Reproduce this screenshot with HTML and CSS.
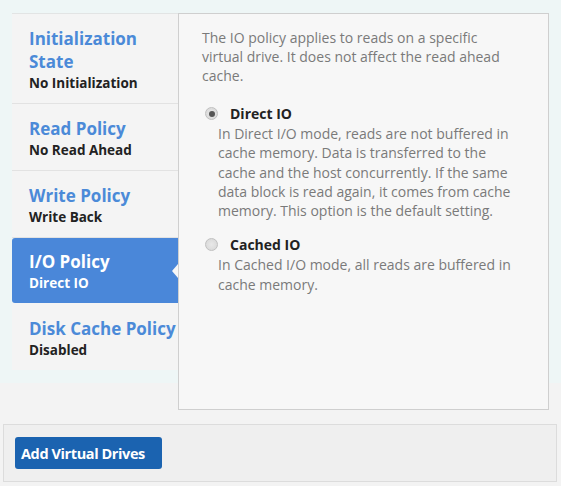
FILE: index.html
```html
<!DOCTYPE html>
<html>
<head>
<meta charset="utf-8">
<link rel="stylesheet" href="styles.css">
</head>
<body>
<div class="layout">
  <ul class="steps">
    <li class="step">
      <div class="step-title">Initialization State</div>
      <div class="step-value">No Initialization</div>
    </li>
    <li class="step">
      <div class="step-title">Read Policy</div>
      <div class="step-value">No Read Ahead</div>
    </li>
    <li class="step">
      <div class="step-title">Write Policy</div>
      <div class="step-value">Write Back</div>
    </li>
    <li class="step active">
      <div class="step-title">I/O Policy</div>
      <div class="step-value">Direct IO</div>
    </li>
    <li class="step last">
      <div class="step-title">Disk Cache Policy</div>
      <div class="step-value">Disabled</div>
    </li>
  </ul>
  <div class="panel">
    <p class="intro">The IO policy applies to reads on a specific virtual drive. It does not affect the read ahead cache.</p>
    <div class="option">
      <div class="option-head"><span class="radio checked"></span><span class="option-label">Direct IO</span></div>
      <p class="option-desc">In Direct I/O mode, reads are not buffered in cache memory. Data is transferred to the cache and the host concurrently. If the same data block is read again, it comes from cache memory. This option is the default setting.</p>
    </div>
    <div class="option">
      <div class="option-head"><span class="radio"></span><span class="option-label">Cached IO</span></div>
      <p class="option-desc">In Cached I/O mode, all reads are buffered in cache memory.</p>
    </div>
  </div>
</div>
<div class="footer">
  <button class="btn-primary">Add Virtual Drives</button>
</div>
</body>
</html>
```
FILE: styles.css
```css
html, body {
  margin: 0;
  padding: 0;
}
body {
  width: 561px;
  height: 486px;
  font-family: "Open Sans", "Noto Sans", sans-serif;
  background: linear-gradient(to bottom, #eef6f6 0, #eef6f6 383px, #f3f3f3 383px);
  overflow: hidden;
}
.layout {
  display: flex;
  align-items: flex-start;
  padding: 13px 12px 0 12px;
}
.steps {
  list-style: none;
  margin: 0;
  padding: 0;
  width: 166px;
  flex: none;
  border-top: 1px solid #e2e4e4;
}
.step {
  position: relative;
  background: #f4f4f4;
  padding: 13px 4px 10px 17px;
  border-bottom: 1px solid #e2e2e2;
}
.step-title {
  font-size: 17px;
  font-weight: 700;
  line-height: 23px;
  color: #4b8ad8;
  white-space: nowrap;
}
.step:first-child .step-title {
  white-space: normal;
  width: 120px;
}
.step-value {
  font-size: 13.5px;
  font-weight: 700;
  line-height: 20px;
  color: #222;
  white-space: nowrap;
}
.step.active {
  background: #4a87d9;
  border-radius: 3px 0 0 3px;
  border-bottom: none;
  padding-top: 12px;
  padding-bottom: 10px;
}
.step.active .step-title,
.step.active .step-value {
  color: #fff;
}
.step.active::after {
  content: "";
  position: absolute;
  right: 0;
  top: 50%;
  margin-top: -7px;
  border-style: solid;
  border-width: 7px 6px 7px 0;
  border-color: transparent #f7f7f7 transparent transparent;
}
.step.last {
  border-bottom: none;
  padding-top: 14px;
}
.panel {
  flex: 1;
  height: 397px;
  box-sizing: border-box;
  border: 1px solid #cfcfcf;
  background: #f7f7f7;
  padding: 14px 30px 0 23px;
  color: #7a7a7a;
  font-size: 14px;
  line-height: 19px;
}
.intro {
  margin: 0 0 19px;
}
.option {
  margin-bottom: 15px;
}
.option-head {
  display: flex;
  align-items: center;
  gap: 12px;
  padding-left: 3px;
}
.radio {
  width: 13px;
  height: 13px;
  box-sizing: border-box;
  border-radius: 50%;
  border: 1px solid #c0c0c0;
  background: radial-gradient(circle, #e8e8e8 0, #d6d6d6 100%);
  flex: none;
  display: flex;
  align-items: center;
  justify-content: center;
}
.radio.checked::before {
  content: "";
  width: 6px;
  height: 6px;
  border-radius: 50%;
  background: #555;
}
.option-label {
  font-weight: 700;
  color: #222;
}
.option-desc {
  margin: 1px 0 0;
  padding-left: 16px;
  line-height: 19.3px;
}
.footer {
  margin: 14px 4px 0 3px;
  height: 58px;
  box-sizing: border-box;
  border: 1px solid #dcdcdc;
  background: #efefef;
  padding: 12px 11px;
}
.btn-primary {
  height: 32px;
  width: 147px;
  border: none;
  border-radius: 3px;
  background: #1b63b0;
  color: #fff;
  font-family: "Open Sans", "Noto Sans", sans-serif;
  font-weight: 700;
  font-size: 14.5px;
  letter-spacing: -0.4px;
  text-align: left;
  padding: 0 0 0 6px;
}
```
